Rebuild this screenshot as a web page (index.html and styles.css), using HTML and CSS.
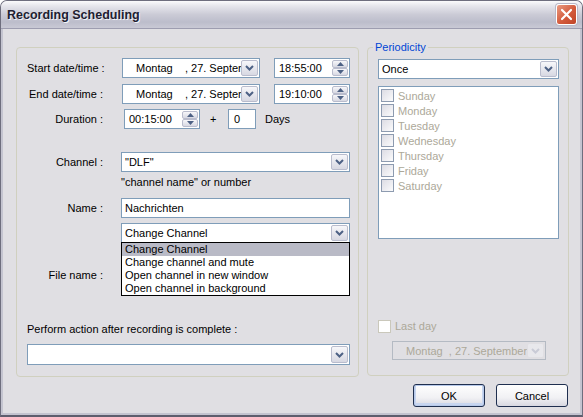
FILE: index.html
```html
<!DOCTYPE html>
<html lang="en">
<head>
    <meta charset="UTF-8">
    <title>Recording Scheduling</title>
    <link rel="stylesheet" href="styles.css">
</head>
<body>
    <div class="window">
        <div class="titlebar">
            <span class="title">Recording Scheduling</span>
            <span class="close-btn">
                <svg width="13" height="13" viewBox="0 0 13 13"><path d="M2 2 L11 11 M11 2 L2 11" stroke="#fff" stroke-width="2.2" stroke-linecap="round"/></svg>
            </span>
        </div>

        <div class="client">
            <div class="columns">
                <div class="group group-main">
                    <div class="row">
                        <span class="lbl">Start date/time :</span>
                        <div class="combo date-combo">
                            <span class="combo-text date-text">Montag&nbsp;&nbsp;&nbsp;&nbsp;, 27. September</span>
                            <span class="drop-btn"><svg width="9" height="6" viewBox="0 0 9 6"><path d="M1 1 L4.5 4.5 L8 1" fill="none" stroke="#4d6185" stroke-width="2"/></svg></span>
                        </div>
                        <div class="spin-field time-field">
                            <span class="spin-text">18:55:00</span>
                            <span class="spin">
                                <span class="spin-half"><svg width="7" height="4" viewBox="0 0 7 4"><path d="M0 4 L3.5 0 L7 4 Z" fill="#4d6185"/></svg></span>
                                <span class="spin-half"><svg width="7" height="4" viewBox="0 0 7 4"><path d="M0 0 L3.5 4 L7 0 Z" fill="#4d6185"/></svg></span>
                            </span>
                        </div>
                    </div>

                    <div class="row row-end">
                        <span class="lbl">End date/time :</span>
                        <div class="combo date-combo">
                            <span class="combo-text date-text">Montag&nbsp;&nbsp;&nbsp;&nbsp;, 27. September</span>
                            <span class="drop-btn"><svg width="9" height="6" viewBox="0 0 9 6"><path d="M1 1 L4.5 4.5 L8 1" fill="none" stroke="#4d6185" stroke-width="2"/></svg></span>
                        </div>
                        <div class="spin-field time-field">
                            <span class="spin-text">19:10:00</span>
                            <span class="spin">
                                <span class="spin-half"><svg width="7" height="4" viewBox="0 0 7 4"><path d="M0 4 L3.5 0 L7 4 Z" fill="#4d6185"/></svg></span>
                                <span class="spin-half"><svg width="7" height="4" viewBox="0 0 7 4"><path d="M0 0 L3.5 4 L7 0 Z" fill="#4d6185"/></svg></span>
                            </span>
                        </div>
                    </div>

                    <div class="row row-duration">
                        <span class="lbl">Duration :</span>
                        <div class="spin-field duration-field">
                            <span class="spin-text">00:15:00</span>
                            <span class="spin">
                                <span class="spin-half"><svg width="7" height="4" viewBox="0 0 7 4"><path d="M0 4 L3.5 0 L7 4 Z" fill="#4d6185"/></svg></span>
                                <span class="spin-half"><svg width="7" height="4" viewBox="0 0 7 4"><path d="M0 0 L3.5 4 L7 0 Z" fill="#4d6185"/></svg></span>
                            </span>
                        </div>
                        <span class="plus">+</span>
                        <div class="textbox days-box">0</div>
                        <span class="days">Days</span>
                    </div>

                    <div class="row row-channel">
                        <span class="lbl">Channel :</span>
                        <div class="combo wide-combo">
                            <span class="combo-text">"DLF"</span>
                            <span class="drop-btn"><svg width="9" height="6" viewBox="0 0 9 6"><path d="M1 1 L4.5 4.5 L8 1" fill="none" stroke="#4d6185" stroke-width="2"/></svg></span>
                        </div>
                    </div>
                    <div class="hint">"channel name" or number</div>

                    <div class="row row-name">
                        <span class="lbl">Name :</span>
                        <div class="textbox wide-box">Nachrichten</div>
                    </div>

                    <div class="row row-action">
                        <span class="lbl"></span>
                        <div class="combo wide-combo action-combo">
                            <span class="combo-text">Change Channel</span>
                            <span class="drop-btn"><svg width="9" height="6" viewBox="0 0 9 6"><path d="M1 1 L4.5 4.5 L8 1" fill="none" stroke="#4d6185" stroke-width="2"/></svg></span>
                            <ul class="drop-list">
                                <li class="selected">Change Channel</li>
                                <li>Change channel and mute</li>
                                <li>Open channel in new window</li>
                                <li>Open channel in background</li>
                            </ul>
                        </div>
                    </div>

                    <div class="row row-file">
                        <span class="lbl">File name :</span>
                        <div class="textbox wide-box"></div>
                    </div>

                    <div class="after-label">Perform action after recording is complete :</div>
                    <div class="combo after-combo">
                        <span class="combo-text"></span>
                        <span class="drop-btn"><svg width="9" height="6" viewBox="0 0 9 6"><path d="M1 1 L4.5 4.5 L8 1" fill="none" stroke="#4d6185" stroke-width="2"/></svg></span>
                    </div>
                </div>

                <fieldset class="group group-period">
                    <legend>Periodicity</legend>
                    <div class="combo once-combo">
                        <span class="combo-text">Once</span>
                        <span class="drop-btn"><svg width="9" height="6" viewBox="0 0 9 6"><path d="M1 1 L4.5 4.5 L8 1" fill="none" stroke="#4d6185" stroke-width="2"/></svg></span>
                    </div>
                    <div class="day-list">
                        <div class="day"><span class="check"></span>Sunday</div>
                        <div class="day"><span class="check"></span>Monday</div>
                        <div class="day"><span class="check"></span>Tuesday</div>
                        <div class="day"><span class="check"></span>Wednesday</div>
                        <div class="day"><span class="check"></span>Thursday</div>
                        <div class="day"><span class="check"></span>Friday</div>
                        <div class="day"><span class="check"></span>Saturday</div>
                    </div>
                    <div class="last-day"><span class="check check-off"></span>Last day</div>
                    <div class="combo last-combo">
                        <span class="combo-text date-text">Montag&nbsp;&nbsp;, 27. September</span>
                        <span class="drop-btn"><svg width="9" height="6" viewBox="0 0 9 6"><path d="M1 1 L4.5 4.5 L8 1" fill="none" stroke="#c9cbd6" stroke-width="2"/></svg></span>
                    </div>
                </fieldset>
            </div>

            <div class="actions">
                <button class="btn btn-default">OK</button>
                <button class="btn">Cancel</button>
            </div>
        </div>
    </div>
</body>
</html>
```

FILE: styles.css
```css
* {
    box-sizing: border-box;
}

body {
    margin: 0;
    font-family: "Liberation Sans", Arial, sans-serif;
    font-size: 11px;
    color: #000;
    background: #fff;
}

.window {
    width: 583px;
    height: 417px;
    background-color: #e0dfe3;
    border: 1px solid #6e6e7e;
    border-bottom: 2px solid #5e5e6e;
    border-radius: 7px 7px 0 0;
    box-shadow: inset 2px 0 0 #c4c4d0, inset -2px 0 0 #c4c4d0, inset 0 -2px 0 #c4c4d0;
    overflow: hidden;
}

/* title bar */
.titlebar {
    height: 28px;
    display: flex;
    align-items: center;
    justify-content: space-between;
    padding: 0 5px 0 6px;
    background: linear-gradient(#fbfbfc 0%, #e6e6ec 18%, #cbcbd6 50%, #bcbdcb 78%, #c9c9d5 100%);
    border-bottom: 1px solid #9d9db0;
}

.title {
    font-weight: bold;
    font-size: 12.5px;
    color: #202030;
    text-shadow: 1px 1px 0 #f4f4f8;
}

.close-btn {
    width: 21px;
    height: 21px;
    display: flex;
    align-items: center;
    justify-content: center;
    border: 1px solid #fff;
    border-radius: 3px;
    background: linear-gradient(135deg, #e99a80, #d35a3c 55%, #c04428);
    box-shadow: 0 0 0 1px #b8b8c8;
}

/* client area */
.client {
    padding: 18px 13px 0 15px;
}

.columns {
    display: flex;
    align-items: flex-start;
    gap: 8px;
}

.group {
    border: 1px solid #d0d0bf;
    border-radius: 4px;
}

.group-main {
    width: 343px;
    height: 330px;
    padding: 10px 8px 0 10px;
}

.row {
    display: flex;
    align-items: center;
    height: 20px;
}

.lbl {
    width: 76px;
    flex: none;
    text-align: right;
    white-space: nowrap;
}

.row-end {
    margin-top: 6px;
}

.row-duration {
    margin-top: 5px;
}

.row-channel {
    margin-top: 23px;
}

.row-name {
    margin-top: 9px;
}

.row-action {
    margin-top: 5px;
}

.row-file {
    margin-top: 22px;
}

.hint {
    margin: 3px 0 0 94px;
    height: 14px;
    line-height: 14px;
}

/* controls */
.combo,
.textbox,
.spin-field {
    height: 20px;
    border: 1px solid #7f9db9;
    background: #fff;
}

.combo {
    position: relative;
    display: flex;
    padding: 1px;
}

.combo-text {
    flex: 1;
    overflow: hidden;
    white-space: nowrap;
    padding-left: 2px;
    line-height: 16px;
}

.drop-btn {
    width: 17px;
    flex: none;
    display: flex;
    align-items: center;
    justify-content: center;
    border: 1px solid #b9bccd;
    border-radius: 2px;
    background: linear-gradient(#f7f7fa, #d7d8e2);
}

.date-combo {
    width: 138px;
    margin-left: 19px;
}

.date-text {
    padding-left: 12px;
}

.wide-combo,
.wide-box {
    width: 229px;
    margin-left: 18px;
}

.textbox {
    line-height: 18px;
    padding-left: 3px;
}

.spin-field {
    display: flex;
    padding: 1px;
}

.spin-text {
    flex: 1;
    line-height: 16px;
    padding-left: 3px;
}

.spin {
    width: 16px;
    flex: none;
    display: flex;
    flex-direction: column;
}

.spin-half {
    flex: 1;
    display: flex;
    align-items: center;
    justify-content: center;
    border: 1px solid #b9bccd;
    border-radius: 2px;
    background: linear-gradient(#f7f7fa, #d7d8e2);
}

.time-field {
    width: 76px;
    margin-left: 14px;
}

.duration-field {
    width: 76px;
    margin-left: 21px;
}

.plus {
    margin-left: 10px;
    width: 18px;
}

.days-box {
    width: 28px;
    padding-left: 5px;
}

.days {
    margin-left: 9px;
}

/* opened list of the action combo */
.drop-list {
    position: absolute;
    top: 100%;
    left: -1px;
    width: 229px;
    margin: 0;
    padding: 0;
    list-style: none;
    background: #fff;
    border: 1px solid #000;
    z-index: 2;
}

.drop-list li {
    height: 13px;
    line-height: 13px;
    padding-left: 3px;
}

.drop-list .selected {
    background-color: #b9bac6;
}

.after-label {
    margin-top: 37px;
    height: 14px;
    line-height: 14px;
}

.after-combo {
    margin-top: 8px;
    height: 21px;
    width: 323px;
}

/* periodicity */
.group-period {
    margin: -6px 0 0;
    width: 202px;
    height: 335px;
    padding: 0 9px 0 10px;
    min-width: 0;
}

.group-period legend {
    color: #0046d5;
    padding: 0 2px;
    margin-left: -5px;
}

.once-combo {
    margin-top: 6px;
    height: 20px;
}

.day-list {
    margin-top: 7px;
    height: 153px;
    border: 1px solid #7f9db9;
    background: #fff;
    padding: 1px 2px;
}

.day {
    height: 15px;
    display: flex;
    align-items: center;
    gap: 4px;
    color: #aca899;
}

.check {
    width: 13px;
    height: 13px;
    flex: none;
    border: 1px solid #8d9bb0;
    background: linear-gradient(135deg, #dcdce4, #fbfbfc);
}

.last-day {
    margin-top: 80px;
    height: 14px;
    display: flex;
    align-items: center;
    gap: 4px;
    color: #aca899;
}

.check-off {
    border-color: #cac8bb;
    background: #fff;
}

.last-combo {
    margin: 8px 0 0 14px;
    width: 154px;
    height: 19px;
    border-color: #b4bac3;
    background: #e0dfe3;
    color: #aca899;
}

.last-combo .drop-btn {
    border-color: #e0dfe3;
    background: #e8e8ec;
}

/* dialog buttons */
.actions {
    display: flex;
    justify-content: flex-end;
    gap: 11px;
    margin-top: 7px;
    padding-right: 1px;
}

.btn {
    width: 72px;
    height: 23px;
    padding: 0;
    font-family: inherit;
    font-size: 11px;
    color: #000;
    border: 1px solid #1f2f4f;
    border-radius: 3px;
    background: linear-gradient(#fefefe, #f1f1f4 60%, #d8d8e1);
}

.btn-default {
    box-shadow: inset 0 0 0 1px #b7c9ea, inset 0 -1px 0 2px #c7d5ef;
}
```
